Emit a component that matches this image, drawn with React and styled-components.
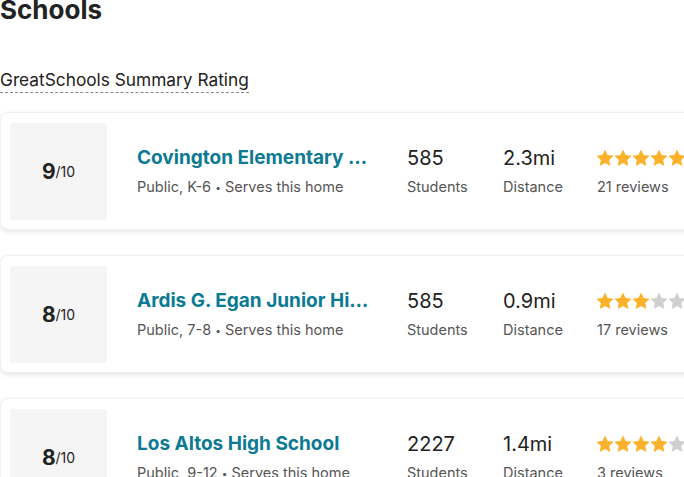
import React from 'react';
import styled, { createGlobalStyle } from 'styled-components';

const GlobalStyle = createGlobalStyle`
    html, body {
        margin: 0;
        padding: 0;
        background: #fff;
        overflow: hidden;
    }

    body {
        font-family: Inter, "Liberation Sans", sans-serif;
        color: #222;
    }
`;

const schools = [
    { rating: 9, name: 'Covington Elementary School', info: 'Public, K-6', students: 585, distance: '2.3mi', stars: 5, reviews: 21 },
    { rating: 8, name: 'Ardis G. Egan Junior High School', info: 'Public, 7-8', students: 585, distance: '0.9mi', stars: 3, reviews: 17 },
    { rating: 8, name: 'Los Altos High School', info: 'Public, 9-12', students: 2227, distance: '1.4mi', stars: 4, reviews: 3 },
];

const Star = ({ filled }) => (
    <svg width="18" height="18" viewBox="0 0 24 24">
        <path
            d="M12 0.8l3.5 7.3 8 1-5.9 5.5 1.5 8L12 18.7l-7.1 3.9 1.5-8L0.5 9.1l8-1z"
            fill={filled ? '#fbb22a' : '#cfcfcf'}
        />
    </svg>
);

const SchoolCard = ({ school }) => (
    <Card>
        <RatingBox>
            <strong>{school.rating}</strong>/10
        </RatingBox>
        <NameCol>
            <Name>{school.name}</Name>
            <Sub>{school.info} <Dot>•</Dot> Serves this home</Sub>
        </NameCol>
        <StatCol width="96px">
            <Value>{school.students}</Value>
            <Sub>Students</Sub>
        </StatCol>
        <StatCol width="94px">
            <Value>{school.distance}</Value>
            <Sub>Distance</Sub>
        </StatCol>
        <StatCol>
            <Stars>
                {[1, 2, 3, 4, 5].map(i => <Star key={i} filled={i <= school.stars} />)}
            </Stars>
            <Sub>{school.reviews} reviews</Sub>
        </StatCol>
    </Card>
);

export default function App() {
    return (
        <>
            <GlobalStyle />
            <Page>
                <Title>Schools</Title>
                <RatingLabel>GreatSchools Summary Rating</RatingLabel>
                <List>
                    {schools.map((s, i) => <SchoolCard key={i} school={s} />)}
                </List>
            </Page>
        </>
    );
}

const Page = styled.div`
    width: 760px;
    margin-top: -6px;
`;

const Title = styled.h2`
    margin: 0;
    font-size: 26px;
    line-height: 32px;
    font-weight: 700;
    color: #222;
`;

const RatingLabel = styled.span`
    display: inline-block;
    margin-top: 43px;
    font-size: 17.3px;
    line-height: 22px;
    color: #222;
    border-bottom: 1.5px dashed #888;
    padding-bottom: 1px;
`;

const List = styled.div`
    display: flex;
    flex-direction: column;
    gap: 25px;
    margin-top: 19px;
`;

const Card = styled.div`
    display: flex;
    align-items: center;
    height: 118px;
    box-sizing: border-box;
    padding: 9px;
    border: 1px solid #f0f0f0;
    border-radius: 8px;
    box-shadow: 0 2px 5px rgba(0, 0, 0, 0.1);
    background: #fff;
`;

const RatingBox = styled.div`
    width: 97px;
    height: 97px;
    flex-shrink: 0;
    display: flex;
    align-items: center;
    justify-content: center;
    background: #f5f5f5;
    border-radius: 3px;
    font-size: 14px;
    color: #222;

    strong {
        font-size: 21px;
        font-weight: 700;
    }
`;

const NameCol = styled.div`
    width: 238px;
    margin-left: 30px;
    margin-right: 32px;
    min-width: 0;
`;

const Name = styled.div`
    font-size: 19px;
    font-weight: 700;
    color: #0b7a93;
    white-space: nowrap;
    overflow: hidden;
    text-overflow: ellipsis;
    line-height: 26px;
`;

const Sub = styled.div`
    font-size: 14.5px;
    color: #555;
    line-height: 20px;
    margin-top: 6px;
    white-space: nowrap;
`;

const Dot = styled.span`
    font-size: 10px;
    vertical-align: 1px;
`;

const StatCol = styled.div`
    width: ${p => p.width || 'auto'};
    flex-shrink: 0;
`;

const Value = styled.div`
    font-size: 20px;
    line-height: 26px;
    color: #222;
`;

const Stars = styled.div`
    display: flex;
    height: 26px;
    align-items: center;
    margin-left: -1px;
`;
